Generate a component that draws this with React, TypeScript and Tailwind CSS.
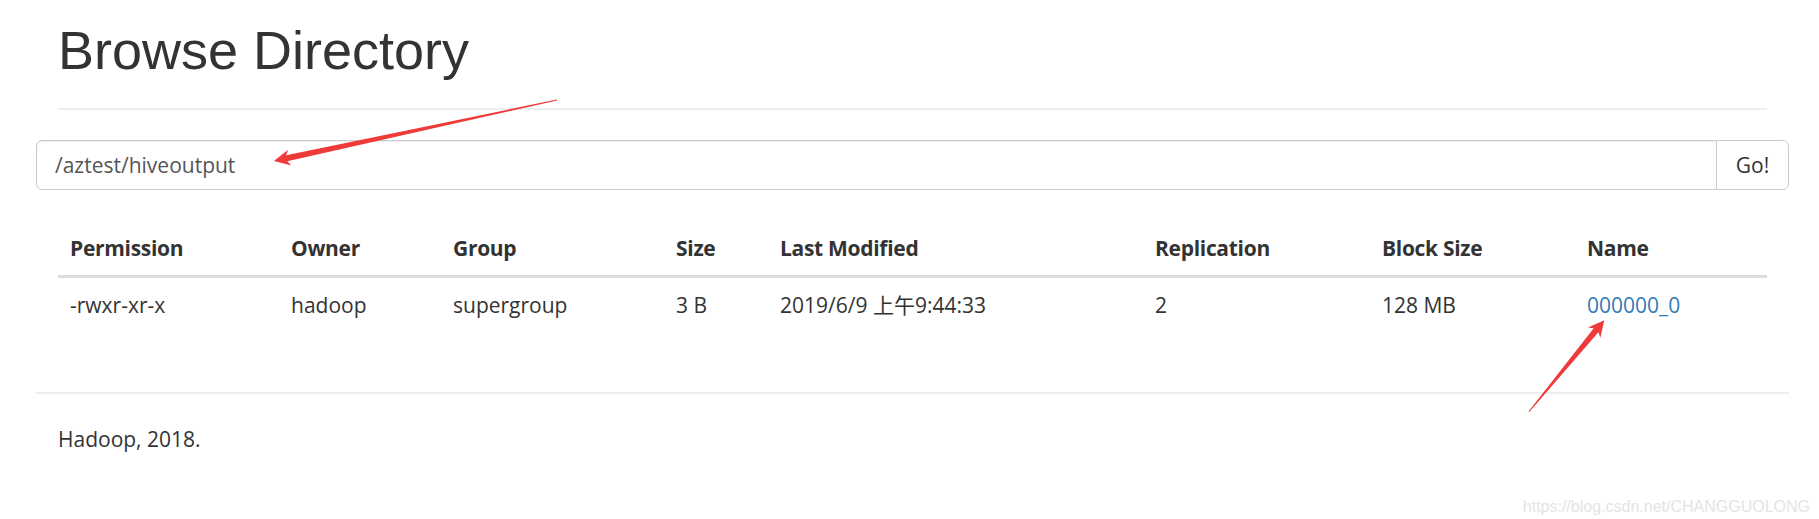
const columns = [
  "Permission",
  "Owner",
  "Group",
  "Size",
  "Last Modified",
  "Replication",
  "Block Size",
  "Name",
];

const rows = [
  {
    permission: "-rwxr-xr-x",
    owner: "hadoop",
    group: "supergroup",
    size: "3 B",
    modified: "2019/6/9 上午9:44:33",
    replication: "2",
    blockSize: "128 MB",
    name: "000000_0",
  },
];

const gridCols =
  "grid grid-cols-[221px_162px_223px_104px_375px_227px_205px_192px]";

function Arrows() {
  return (
    <svg
      className="pointer-events-none absolute left-0 top-0"
      width={1819}
      height={519}
      viewBox="0 0 1819 519"
    >
      <polygon
        fill="#ef3a3a"
        points="556.9,99.5 286.1,155.3 288.0,149.8 274,161 291.3,165.5 287.3,161.2 557.1,100.5"
      />
      <polygon
        fill="#ef3a3a"
        points="1529.3,412.1 1598.4,332.2 1600.3,337.7 1604.3,320.2 1588.0,327.5 1593.7,328.3 1528.5,411.5"
      />
    </svg>
  );
}

export default function App() {
  return (
    <div
      className="relative h-[519px] w-[1819px] overflow-hidden bg-white text-[21px] leading-[30px] text-[#333]"
      style={{ fontFamily: '"Open Sans", "Noto Sans CJK SC", sans-serif' }}
    >
      <div className="ml-[36px] w-[1753px] pt-[21px]">
        {/* page header */}
        <div className="mx-[22px] border-b-[2px] border-[#eee] pb-[13px]">
          <h1
            className="mb-[15px] text-[54px] leading-[59px] font-normal text-[#333]"
            style={{ fontFamily: '"Liberation Sans", Arial, sans-serif' }}
          >
            Browse Directory
          </h1>
        </div>

        {/* path input */}
        <form className="mt-[30px] flex h-[50px]" onSubmit={(e) => e.preventDefault()}>
          <input
            type="text"
            defaultValue="/aztest/hiveoutput"
            className="h-full min-w-0 flex-1 rounded-l-[6px] border border-[#ccc] px-[18px] text-[21px] text-[#555] shadow-[inset_0_1px_1px_rgba(0,0,0,0.075)] outline-none"
          />
          <button
            type="button"
            className="-ml-px h-full w-[73px] rounded-r-[6px] border border-[#ccc] bg-white text-[21px] text-[#333]"
          >
            Go!
          </button>
        </form>

        {/* listing */}
        <div className="mx-[22px] mt-[31px]">
          <div className={`${gridCols} border-b-[3px] border-[#ddd]`}>
            {columns.map((c) => (
              <div key={c} className="p-[12px] font-bold tracking-[-0.3px]">
                {c}
              </div>
            ))}
          </div>
          {rows.map((r) => (
            <div key={r.name} className={gridCols}>
              <div className="p-[12px]">{r.permission}</div>
              <div className="p-[12px]">{r.owner}</div>
              <div className="p-[12px]">{r.group}</div>
              <div className="p-[12px]">{r.size}</div>
              <div className="p-[12px]">{r.modified}</div>
              <div className="p-[12px]">{r.replication}</div>
              <div className="p-[12px]">{r.blockSize}</div>
              <div className="p-[12px]">
                <a href="#" className="text-[#337ab7]">
                  {r.name}
                </a>
              </div>
            </div>
          ))}
        </div>

        {/* footer */}
        <div className="mt-[60px] h-[2px] bg-[#eee]" />
        <p className="mx-[22px] mt-[30px]">Hadoop, 2018.</p>
      </div>

      <Arrows />

      <div
        className="absolute right-[9px] top-[497px] text-[16px] leading-[20px] text-[#e4e4e4]"
        style={{ fontFamily: '"Liberation Sans", Arial, sans-serif' }}
      >
        https://blog.csdn.net/CHANGGUOLONG
      </div>
    </div>
  );
}
